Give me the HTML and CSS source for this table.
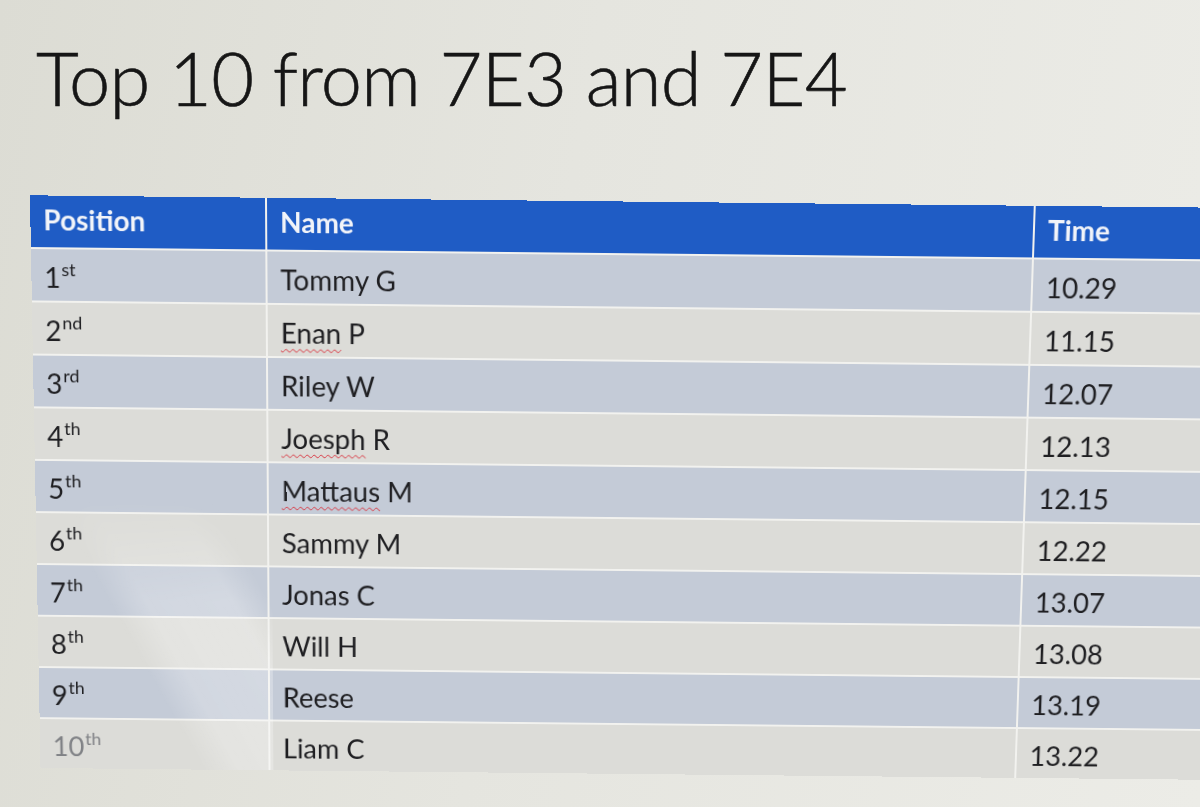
FILE: index.html
```html
<!DOCTYPE html>
<html lang="en">
<head>
<meta charset="utf-8">
<title>Top 10 from 7E3 and 7E4</title>
<link rel="stylesheet" href="styles.css">
</head>
<body>
<main class="slide">
  <h1 class="title">Top 10 from 7E3 and 7E4</h1>
  <div class="table">
    <div class="row head">
      <div class="cell pos">Position</div>
      <div class="cell name">Name</div>
      <div class="cell time">Time</div>
    </div>
    <div class="row odd">
      <div class="cell pos">1<sup>st</sup></div>
      <div class="cell name">Tommy G</div>
      <div class="cell time">10.29</div>
    </div>
    <div class="row even">
      <div class="cell pos">2<sup>nd</sup></div>
      <div class="cell name"><span class="spell">Enan</span> P</div>
      <div class="cell time">11.15</div>
    </div>
    <div class="row odd">
      <div class="cell pos">3<sup>rd</sup></div>
      <div class="cell name">Riley W</div>
      <div class="cell time">12.07</div>
    </div>
    <div class="row even">
      <div class="cell pos">4<sup>th</sup></div>
      <div class="cell name"><span class="spell">Joesph</span> R</div>
      <div class="cell time">12.13</div>
    </div>
    <div class="row odd">
      <div class="cell pos">5<sup>th</sup></div>
      <div class="cell name"><span class="spell">Mattaus</span> M</div>
      <div class="cell time">12.15</div>
    </div>
    <div class="row even">
      <div class="cell pos">6<sup>th</sup></div>
      <div class="cell name">Sammy M</div>
      <div class="cell time">12.22</div>
    </div>
    <div class="row odd">
      <div class="cell pos">7<sup>th</sup></div>
      <div class="cell name">Jonas C</div>
      <div class="cell time">13.07</div>
    </div>
    <div class="row even">
      <div class="cell pos">8<sup>th</sup></div>
      <div class="cell name">Will H</div>
      <div class="cell time">13.08</div>
    </div>
    <div class="row odd">
      <div class="cell pos">9<sup>th</sup></div>
      <div class="cell name">Reese</div>
      <div class="cell time">13.19</div>
    </div>
    <div class="row even">
      <div class="cell pos faded">10<sup>th</sup></div>
      <div class="cell name">Liam C</div>
      <div class="cell time">13.22</div>
    </div>
  </div>
</main>
</body>
</html>
```

FILE: styles.css
```css
html, body {
  margin: 0;
  padding: 0;
  height: 100%;
  overflow: hidden;
}

body {
  background: linear-gradient(100deg, #dcdcd4 0%, #e5e5df 45%, #ecece7 100%);
  font-family: Lato, "Open Sans", "Liberation Sans", sans-serif;
  color: #1f1f22;
}

.slide {
  width: 1200px;
  height: 807px;
  padding-top: 33px;
  box-sizing: border-box;
}

.title {
  margin: 0 0 0 36px;
  font-family: Lato, "Open Sans", sans-serif;
  font-weight: 300;
  font-size: 74px;
  line-height: 90px;
  color: #161616;
  letter-spacing: -0.7px;
  -webkit-text-stroke: 0.6px #161616;
  height: 166px;
}

.table {
  position: relative;
  margin-left: 30px;
  width: 1220px;
  display: flex;
  flex-direction: column;
  gap: 2px;
  background: #f2f2ef;
  transform-origin: 353px 0;
  transform: perspective(1500px) rotateX(-4.5deg) skewY(0.6deg);
}

.table::after {
  content: "";
  position: absolute;
  left: 0;
  top: 0;
  width: 240px;
  height: 100%;
  pointer-events: none;
  background: linear-gradient(62deg,
    transparent 0%, transparent 30%,
    rgba(255, 255, 255, 0.24) 37%,
    rgba(255, 255, 255, 0.28) 53%,
    transparent 60%, transparent 100%);
  -webkit-mask-image: linear-gradient(to bottom, transparent 0%, transparent 52%, #000 70%, #000 100%);
  mask-image: linear-gradient(to bottom, transparent 0%, transparent 52%, #000 70%, #000 100%);
}

.row {
  display: grid;
  grid-template-columns: 235px 767px 1fr;
  column-gap: 2px;
  height: 52px;
}

.cell {
  font-size: 28px;
  padding: 12px 0 0 13px;
  box-sizing: border-box;
  line-height: 32px;
  white-space: nowrap;
}

.head .cell {
  background: #1f5cc5;
  color: #f2f4f9;
  font-weight: 700;
  font-size: 28px;
  padding-top: 8px;
}

.odd .cell {
  background: #c4cbd7;
}

.even .cell {
  background: #dcdcd8;
}

.pos sup {
  font-size: 18px;
  vertical-align: 0;
  position: relative;
  top: -12px;
  margin-left: 1px;
}

.faded {
  color: #808286;
}

.spell {
  text-decoration: underline wavy #d8343f;
  text-decoration-thickness: 1px;
  text-underline-offset: 5px;
}
```
